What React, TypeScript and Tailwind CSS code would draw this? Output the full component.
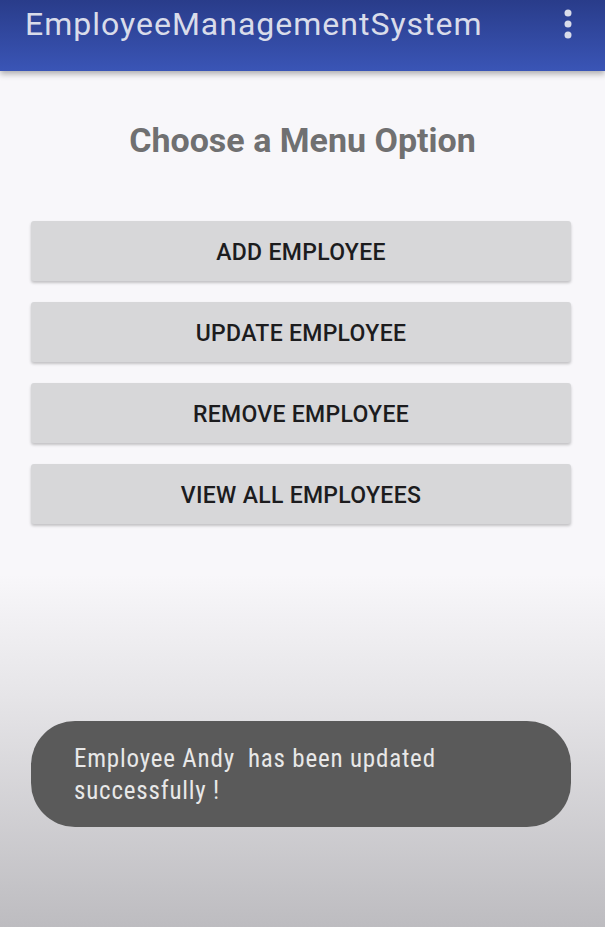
export default function App() {
  const options = ["ADD EMPLOYEE", "UPDATE EMPLOYEE", "REMOVE EMPLOYEE", "VIEW ALL EMPLOYEES"];

  return (
    <div className="relative flex h-[927px] w-[605px] flex-col overflow-hidden bg-[linear-gradient(to_bottom,#f8f7fa_0%,#f8f7fa_62%,#e6e5e8_75%,#bdbcc0_100%)] font-['Roboto',sans-serif]">
      {/* App bar */}
      <header className="z-10 flex h-[71px] shrink-0 items-start justify-between bg-[linear-gradient(to_bottom,#293c8a,#3a55b6)] pl-[25px] pr-[33px] shadow-[0_3px_6px_rgba(0,0,0,0.3)]">
        <h1 className="mt-[4px] text-[32px] leading-[40px] tracking-[1px] text-[#d9dcea]">EmployeeManagementSystem</h1>
        <svg width="8" height="30" viewBox="0 0 8 30" className="mt-[9px]">
          <circle cx="4" cy="4" r="3.5" fill="#d9dcea" />
          <circle cx="4" cy="15" r="3.5" fill="#d9dcea" />
          <circle cx="4" cy="26" r="3.5" fill="#d9dcea" />
        </svg>
      </header>

      <h2 className="mt-[49px] text-center text-[34px] font-bold leading-[40px] text-[#707071]">Choose a Menu Option</h2>

      <div className="mt-[61px] flex flex-col gap-[21px] pl-[31px] pr-[34px]">
        {options.map((o) => (
          <button
            key={o}
            className="h-[60px] w-full rounded-[3px] bg-[#d7d7d9] pt-[4px] text-[23px] font-medium tracking-[0.3px] text-[#1c1c1e] shadow-[0_2px_3px_rgba(0,0,0,0.22)]"
          >
            {o}
          </button>
        ))}
      </div>

      {/* Toast */}
      <div className="absolute left-[31px] top-[721px] h-[106px] w-[540px] rounded-[44px] bg-[#5a5a5a] pl-[43px] pr-6 pt-[22px]">
        <p className="text-[25px] leading-[32px] tracking-[0.8px] text-[#e8e8e8] [font-stretch:semi-condensed]">
          Employee Andy&nbsp; has been updated
          <br />
          successfully !
        </p>
      </div>
    </div>
  );
}
